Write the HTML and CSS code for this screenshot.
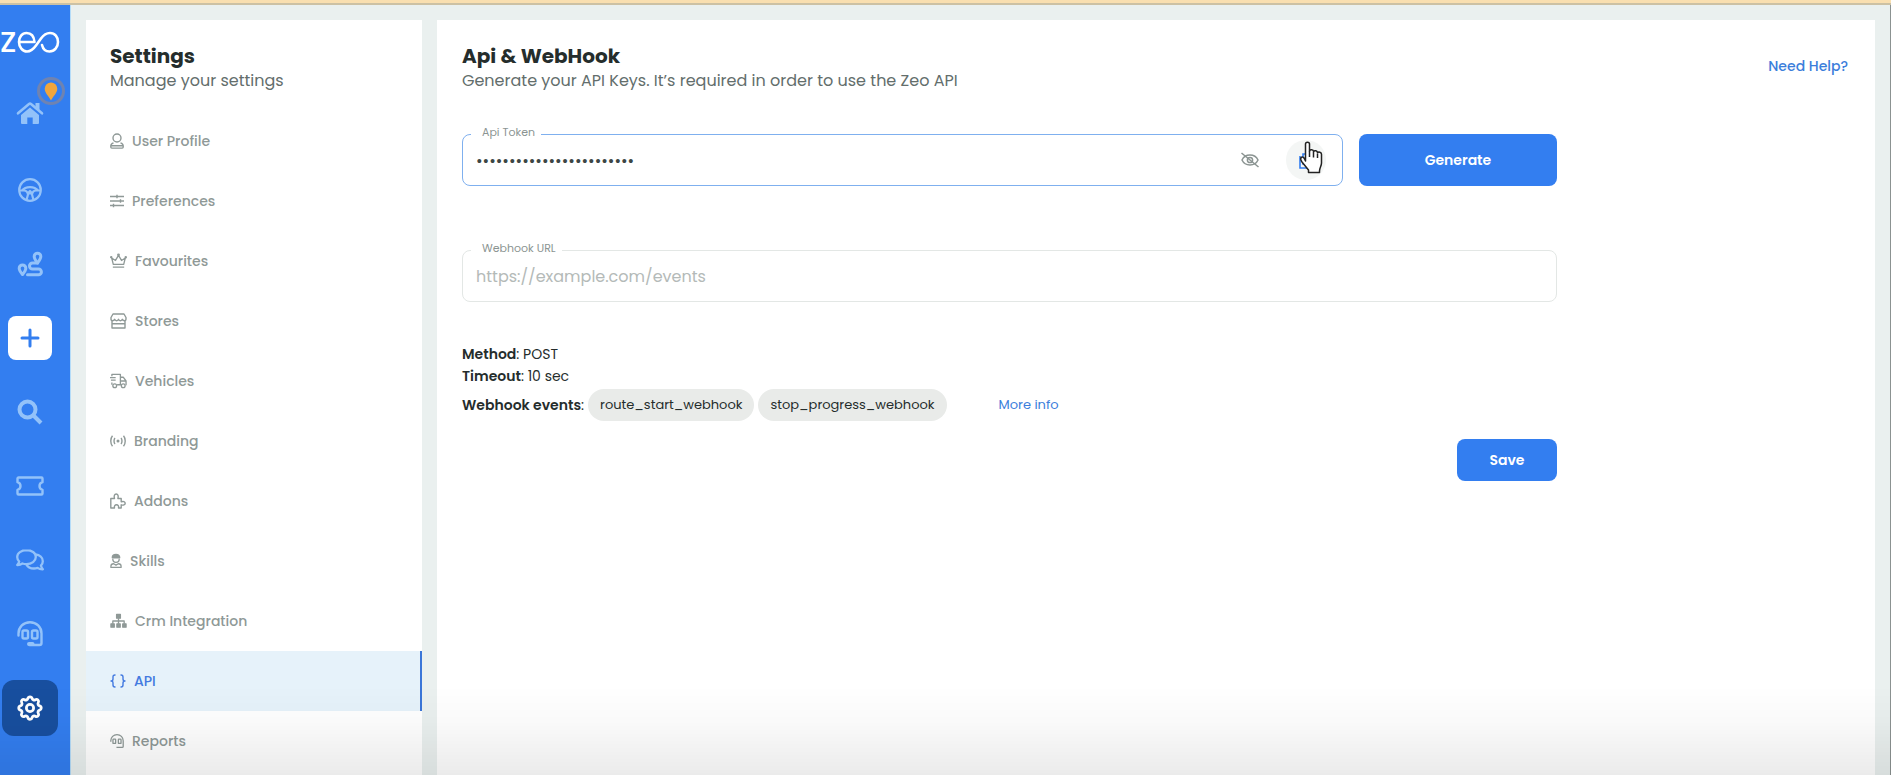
FILE: index.html
```
<!DOCTYPE html>
<html lang="en">
<head>
    <meta charset="UTF-8">
    <meta name="viewport" content="width=device-width, initial-scale=1">
    <title>Zeo - Api &amp; WebHook</title>
    <link rel="stylesheet" href="styles.css">
</head>
<body>
    <div class="topbar"></div>
    <div class="layout">
        <nav class="sidebar" aria-label="Main">
            <a href="#" class="logo" aria-label="Zeo">
                <svg width="60" height="24" viewBox="0 0 60 24" fill="none" stroke="currentColor" stroke-width="2.6" stroke-linecap="round" stroke-linejoin="round">
                    <text class="logo-z" x="0" y="22">z</text>
                    <path d="M19 12h15.500C34 6 31 3 26.500 3 22 3 19 7 19 12s3.500 9.500 8 9.500c4 0 6.500-2.500 9-6l5-7C43.500 5 46 3 50 3c5 0 8 4 8 9s-3.500 9.500-8.500 9.500c-4 0-6.500-2.500-7.500-6.500"/>
                </svg>
            </a>
            <a href="#" class="nav-item home" aria-label="Home">
                <svg width="28" height="24" viewBox="0 0 28 24" fill="currentColor">
                    <path d="M14 6.500 5 14V22a1 1 0 0 0 1 1h5.300v-6.500h5.400V23H22a1 1 0 0 0 1-1v-8z"/>
                    <path d="M2 12.300 13 3a1.600 1.600 0 0 1 2 0l11 9.300" fill="none" stroke="currentColor" stroke-width="2.600" stroke-linecap="round"/>
                    <path d="M19.500 2h4v8l-4-3.500z"/>
                </svg>
                <span class="pin">
                    <svg width="14" height="19" viewBox="0 0 14 19"><path fill="#f0a53c" d="M7 .5A6.300 6.300 0 0 0 .7 6.800C.7 11 5 14.500 7 18.500c2-4 6.300-7.500 6.300-11.700A6.300 6.300 0 0 0 7 .5z"/></svg>
                </span>
            </a>
            <a href="#" class="nav-item" aria-label="Drivers">
                <svg width="24" height="24" viewBox="0 0 24 24" fill="none" stroke="currentColor" stroke-width="2.200" stroke-linejoin="round">
                    <circle cx="12" cy="12" r="10.800"/>
                    <path d="M1.500 12.500H4C7.500 8 16.500 8 20 12.500h2.500M4 12.500h2c2.500 0 3.500 1.500 4 4L8.500 22M20 12.500h-2c-2.500 0-3.500 1.500-4 4l1.500 5.500M9.800 15.500 12 13l2.200 2.500z"/>
                </svg>
            </a>
            <a href="#" class="nav-item" aria-label="Routes">
                <svg width="26" height="26" viewBox="0 0 26 26" fill="none" stroke="currentColor" stroke-width="3" stroke-linecap="round" stroke-linejoin="round">
                    <path d="M20.500 12C18.500 9.500 17.200 7.500 17.200 5.500a3.300 3.300 0 0 1 6.600 0c0 2-1.300 4-3.300 6.500zM5.500 23.500C3.500 21 2.200 19.200 2.200 17.200a3.300 3.300 0 0 1 6.600 0c0 2-1.300 3.800-3.300 6.300z"/>
                    <path d="M20.500 12h-5a3 3 0 0 0 0 6h6a2.900 2.900 0 0 1 0 5.800H10.500"/>
                </svg>
            </a>
            <button type="button" class="nav-add" aria-label="Add">
                <svg width="20" height="20" viewBox="0 0 20 20" fill="none" stroke="currentColor" stroke-width="3" stroke-linecap="round"><path d="M10 2v16M2 10h16"/></svg>
            </button>
            <a href="#" class="nav-item" aria-label="Search">
                <svg width="26" height="26" viewBox="0 0 26 26" fill="none" stroke="currentColor" stroke-width="4"><circle cx="10.500" cy="10.500" r="8"/><path d="m16.500 16.500 7.500 7.500"/></svg>
            </a>
            <a href="#" class="nav-item" aria-label="Tickets">
                <svg width="28" height="20" viewBox="0 0 28 20" fill="none" stroke="currentColor" stroke-width="2.400" stroke-linejoin="round"><path d="M2.500 1.500h23a1 1 0 0 1 1 1v3.700c-2 .6-3 2-3 3.800s1 3.200 3 3.800v3.700a1 1 0 0 1-1 1h-23a1 1 0 0 1-1-1v-3.700c2-.6 3-2 3-3.800s-1-3.200-3-3.800V2.500a1 1 0 0 1 1-1z"/></svg>
            </a>
            <a href="#" class="nav-item" aria-label="Chat">
                <svg width="28" height="22" viewBox="0 0 28 22" fill="none" stroke="currentColor" stroke-width="2.300" stroke-linejoin="round">
                    <path d="M10.500 1.200C5.300 1.200 1.200 4 1.200 8c0 1.800.8 3.300 2 4.500-.3 1.300-1 2.500-2 3.500 2 .1 3.800-.5 5.200-1.500 1.300.5 2.600.7 4.100.7 5.200 0 9.300-3.100 9.300-7.200s-4.100-6.800-9.300-6.800z"/>
                    <path d="M19.500 5.500c4.200.4 7.300 3.200 7.300 6.700 0 1.700-.7 3.200-1.900 4.400.3 1.500 1 2.700 2 3.700-2 .1-3.900-.4-5.300-1.400-1.200.4-2.300.6-3.600.6-3.500 0-6.500-1.700-7.800-4.300"/>
                </svg>
            </a>
            <a href="#" class="nav-item" aria-label="Support">
                <svg width="26" height="26" viewBox="0 0 26 26" fill="none" stroke="currentColor" stroke-width="2.400" stroke-linecap="round" stroke-linejoin="round">
                    <path d="M1.500 14.500V12.500C1.500 6 6.500 1.200 13 1.200S24.500 6 24.500 12.500V22a2 2 0 0 1-2 2H12.500"/>
                    <rect x="5.500" y="9.500" width="5.500" height="8" rx="1.500"/><rect x="15" y="9.500" width="5.500" height="8" rx="1.500"/>
                    <path d="M12 23h3.500" stroke-width="4"/>
                </svg>
            </a>
            <a href="#" class="nav-item selected" aria-label="Settings" aria-current="page">
                <svg width="30" height="30" viewBox="0 0 24 24" fill="none" stroke="currentColor" stroke-width="2.200" stroke-linejoin="round">
                    <path d="M10.325 4.317c.426-1.756 2.924-1.756 3.350 0a1.724 1.724 0 0 0 2.573 1.066c1.543-.94 3.310.826 2.370 2.370a1.724 1.724 0 0 0 1.065 2.572c1.756.426 1.756 2.924 0 3.350a1.724 1.724 0 0 0-1.066 2.573c.94 1.543-.826 3.310-2.370 2.370a1.724 1.724 0 0 0-2.572 1.065c-.426 1.756-2.924 1.756-3.350 0a1.724 1.724 0 0 0-2.573-1.066c-1.543.94-3.310-.826-2.370-2.370a1.724 1.724 0 0 0-1.065-2.572c-1.756-.426-1.756-2.924 0-3.350a1.724 1.724 0 0 0 1.066-2.573c-.94-1.543.826-3.310 2.370-2.370 1 .608 2.296.07 2.572-1.065z"/>
                    <circle cx="12" cy="12" r="2.900"/>
                </svg>
            </a>
        </nav>

        <aside class="settings">
            <div class="heading">
                <h2>Settings</h2>
                <p>Manage your settings</p>
            </div>
            <ul class="menu">
                <li><a href="#">
                    <svg width="14" height="16" viewBox="0 0 14 16"><circle cx="7" cy="5" r="4"/><path d="M3.500 9.800C1.800 10.300.8 11.500.8 13v1c0 .7.400 1.100 1 1.100h10.400c.6 0 1-.4 1-1.100v-1c0-1.500-1-2.700-2.700-3.200M1 12.800h12"/></svg>
                    User Profile</a></li>
                <li><a href="#">
                    <svg width="14" height="14" viewBox="0 0 14 14"><path d="M0 2.500h14M0 7h14M0 11.500h14M7 .7v3.600M10.500 5.200v3.600M3.500 9.700v3.600"/></svg>
                    Preferences</a></li>
                <li><a href="#">
                    <svg width="17" height="16" viewBox="0 0 18 16"><path d="M3.500 11.500 1.800 4.800l4 2.600L9 2l3.200 5.400 4-2.600-1.700 6.700zM3 14.500h12"/><circle cx="9" cy="1.500" r=".8"/><circle cx="1.300" cy="4" r=".6"/><circle cx="16.700" cy="4" r=".6"/></svg>
                    Favourites</a></li>
                <li><a href="#">
                    <svg width="17" height="16" viewBox="0 0 17 16"><path d="M3 1h11l2 3.500v1.800c0 .9-.8 1.500-1.700 1.500-1 0-1.500-.8-2-1.500-.5.700-1.100 1.500-1.900 1.500s-1.400-.8-1.900-1.500c-.5.700-1.100 1.500-1.900 1.500s-1.400-.8-1.900-1.500c-.5.700-1 1.500-2 1.500C1.800 7.800 1 7.200 1 6.300V4.500zM2 7.800V15h13V7.800M2 10.800h13"/></svg>
                    Stores</a></li>
                <li><a href="#">
                    <svg width="17" height="16" viewBox="0 0 18 16"><path d="M2 3V1h9v11H7.500M11 4h3l3 4v4h-.5M0 4.500h6M1 7h5M2 9.500v2.500M11 8h6M11 12h1"/><circle cx="5" cy="13" r="2"/><circle cx="14" cy="13" r="2"/></svg>
                    Vehicles</a></li>
                <li><a href="#">
                    <svg width="16" height="12" viewBox="0 0 16 12"><path d="M2.500.8C.2 3.500.2 8.500 2.500 11.200M13.500.8c2.300 2.700 2.300 7.700 0 10.400M5 3C3.700 4.500 3.700 7.500 5 9M11 3c1.300 1.500 1.300 4.500 0 6"/><circle cx="8" cy="6" r=".8" fill="currentColor"/></svg>
                    Branding</a></li>
                <li><a href="#">
                    <svg width="16" height="16" viewBox="0 0 16 16"><path d="M.8 5.500h3.700c-.8-2.500 0-4.500 1.700-4.500s2.500 2 1.700 4.500h3.300v3.300c2-.8 4-.1 4 1.500s-2 2.300-4 1.500V15H8.500c.5-2-.5-3.300-2-3.300s-2.500 1.300-2 3.300H.8z"/></svg>
                    Addons</a></li>
                <li><a href="#">
                    <svg width="12" height="16" viewBox="0 0 13 16"><path d="M3 5.500C3 8 4.500 9.500 6.500 9.500S10 8 10 5.500M1 15v-1.500C1 11.800 2.500 11 4 11l2.500 1.500L9 11c1.500 0 3 .8 3 2.500V15z"/><path d="M2.500 4.500h8V4C10.500 2 9 .8 6.500.8S2.500 2 2.500 4z" fill="currentColor"/></svg>
                    Skills</a></li>
                <li><a href="#">
                    <svg width="17" height="16" viewBox="0 0 18 16"><path d="M9 5v6M3 11V8h12v3"/><path d="M7 1h4v4H7zM1 11h3.500v3.500H1zM7.300 11h3.500v3.500H7.300zM13.500 11H17v3.500h-3.500z" fill="currentColor"/></svg>
                    Crm Integration</a></li>
                <li><a href="#" class="active" aria-current="page">
                    <svg width="16" height="14" viewBox="0 0 16 14"><path d="M5.500 1H5C3.500 1 3 1.700 3 3v2c0 1.200-.6 2-2 2 1.400 0 2 .8 2 2v2c0 1.300.5 2 2 2h.5M10.500 1h.5c1.500 0 2 .7 2 2v2c0 1.200.6 2 2 2-1.400 0-2 .8-2 2v2c0 1.300-.5 2-2 2h-.5"/></svg>
                    API</a></li>
                <li><a href="#">
                    <svg width="14" height="16" viewBox="0 0 26 28" class="heavy"><path d="M1.500 15.500V13.500C1.500 7 6.500 2.200 13 2.200S24.500 7 24.500 13.500V24a2 2 0 0 1-2 2H12"/><rect x="5.500" y="10.500" width="5" height="8" rx="1"/><rect x="15.500" y="10.500" width="5" height="8" rx="1"/></svg>
                    Reports</a></li>
            </ul>
        </aside>

        <main class="content">
            <header class="content-head">
                <div class="heading">
                    <h1>Api &amp; WebHook</h1>
                    <p>Generate your API Keys. It’s required in order to use the Zeo API</p>
                </div>
                <a href="#" class="link">Need Help?</a>
            </header>
            <form class="form">
                <div class="token-row">
                    <div class="field focused">
                        <label for="token">Api Token</label>
                        <input type="password" id="token" value="a8f31c09d7e24b65a1f0c3d9">
                        <button type="button" class="icon-btn" aria-label="Show token">
                            <svg width="20" height="16" viewBox="0 0 20 16" fill="none" stroke="currentColor" stroke-width="1.500"><path d="M2 8C3.500 4.800 6 3 10 3s6.500 1.800 8 5c-1.500 3.200-4 5-8 5s-6.500-1.800-8-5z"/><circle cx="10" cy="8" r="2.600"/><path d="m1.500 1 17 14"/></svg>
                        </button>
                        <button type="button" class="icon-btn copy" aria-label="Copy token">
                            <svg width="16" height="18" viewBox="0 0 16 18" fill="none" stroke="currentColor" stroke-width="1.600"><path d="M5 3h8v10H5zM10 17H2V5"/></svg>
                            <svg class="cursor" width="24" height="34" viewBox="0 0 24 34" fill="#fff" stroke="#222" stroke-width="1.500" stroke-linejoin="round"><path d="M6.500 20V3c0-2.500 4-2.500 4 0v7c.5-2 4-1.500 4 .5 1-1.500 4-.8 4 1.300 1-1.300 4-.6 4 1.500V22c0 3-2 5-2 8v1.500H9.500V29L3 21c-3-4 0-6.500 2-4z"/><path d="M10.500 10v6M14.500 11v5.500M18.500 12.500v4.500"/></svg>
                        </button>
                    </div>
                    <button type="button" class="btn generate">Generate</button>
                </div>
                <div class="field">
                    <label for="webhook">Webhook URL</label>
                    <input type="text" id="webhook" placeholder="https://example.com/events">
                </div>
                <div class="info">
                    <p><b>Method</b>: POST</p>
                    <p><b>Timeout</b>: 10 sec</p>
                    <div class="events">
                        <span><b>Webhook events</b>:</span>
                        <span class="chip">route_start_webhook</span>
                        <span class="chip">stop_progress_webhook</span>
                        <a href="#" class="link more">More info</a>
                    </div>
                </div>
                <button type="submit" class="btn save">Save</button>
            </form>
        </main>
    </div>
</body>
</html>
```
FILE: styles.css
```
*{margin: 0;padding: 0;box-sizing: border-box;}
a{text-decoration: none;color: inherit;}
ul,li{list-style: none;}
button,input{font: inherit;border: none;outline: none;background: none;}
button{cursor: pointer;}
b{font-weight: 600;}
svg{display: block;flex: none;overflow: visible;}
body{height: 100vh;overflow: hidden;display: flex;flex-direction: column;font-size: 14px;font-family: Poppins, Inter, "Open Sans", sans-serif;color: #252d2c;background: #eaf0ef;}
/* soft shade along the bottom edge */
body::after{content: "";position: fixed;left: 0;right: 0;bottom: 0;height: 90px;background: linear-gradient(rgba(0,0,0,0), rgba(0,0,0,.02) 40%, rgba(0,0,0,.08));pointer-events: none;}

.topbar{flex: none;height: 5px;background: #f9dfb0;border-bottom: 2px solid #ccc1a4;}
.layout{flex: 1;min-height: 0;display: flex;gap: 15px;padding-right: 15px;border-right: 1px solid #8b9291;}

/* sidebar */
.sidebar{flex: none;width: 71px;padding-right: 11px;display: flex;flex-direction: column;align-items: center;gap: 18px;background: #337ef0;border-right: 1px solid #b5dcf8;color: #93c2f9;}
.logo{align-self: flex-start;margin: 25px 0 13px;color: #fff;}
.logo-z{font: 36px Poppins, Lato, sans-serif;fill: currentColor;stroke: none;}
.nav-item{position: relative;flex: none;width: 56px;height: 56px;border-radius: 12px;display: flex;align-items: center;justify-content: center;}
.home{margin-bottom: 3px;}
.nav-item.selected{background: #184f9f;color: #fff;}
.pin{position: absolute;top: -8px;right: -7px;width: 28px;height: 28px;border-radius: 50%;border: 3px solid #6f83b1;display: flex;align-items: center;justify-content: center;}
.nav-add{flex: none;width: 44px;height: 44px;margin: 6px 0;border-radius: 8px;background: #fff;color: #337ef0;display: flex;align-items: center;justify-content: center;}

/* settings menu */
.settings,.content{margin-top: 15px;background: #fff;}
.settings{flex: none;width: 336px;padding-top: 22px;overflow: hidden;}
.heading h1,.heading h2{font-size: 20px;line-height: 28px;font-weight: 700;}
.heading p{font-size: 16px;line-height: 22px;color: #636e6c;}
.settings .heading{padding: 0 24px;}
.menu{margin-top: 19px;}
.menu a{height: 60px;padding-left: 24px;display: flex;align-items: center;gap: 8px;font-weight: 500;color: #8f9997;}
.menu svg{fill: none;stroke: currentColor;stroke-width: 1.400;stroke-linejoin: round;}
.menu svg.heavy{stroke-width: 2.400;}
.menu a.active{color: #437ae0;background: #e6f2fa;border-right: 2px solid #3b76d8;}

/* api & webhook */
.content{flex: 1;min-width: 0;padding: 22px 27px 0 25px;}
.content-head{display: flex;justify-content: space-between;align-items: flex-start;}
.link{color: #3b7edb;}
.content-head .link{font-size: 14px;font-weight: 500;line-height: 20px;padding-top: 14px;}
.form{width: 79%;margin-top: 42px;display: flex;flex-direction: column;}
.token-row{display: flex;gap: 16px;margin-bottom: 64px;}
.field{position: relative;flex: 1;min-height: 52px;padding: 0 16px 0 13px;display: flex;align-items: center;gap: 26px;border: 1px solid #e3e7e5;border-radius: 8px;}
.field.focused{border-color: #7fb0ef;}
.field label{position: absolute;top: -10px;left: 8px;padding: 0 6px 0 11px;font-size: 11px;line-height: 14px;color: #8b9492;background: #fff;}
.field input{flex: 1;min-width: 0;height: 50px;font-size: 16px;color: #3c4644;}
.field input::placeholder{color: #b4bab8;}
.icon-btn{width: 20px;height: 40px;display: flex;align-items: center;justify-content: center;color: #8b9492;}
.icon-btn.copy{position: relative;width: 40px;border-radius: 50%;background: #f4f6f5;color: #337ef0;}
.cursor{position: absolute;left: 13px;top: 1px;}
.btn{border-radius: 8px;background: #337ef0;color: #fff;font-size: 14px;font-weight: 600;}
.generate{width: 198px;}
.info{margin-top: 41px;font-size: 14px;line-height: 22px;}
.events{display: flex;align-items: center;gap: 4px;margin-top: 2px;}
.chip{padding: 5px 12px;border-radius: 16px;background: #e9ebe9;font-size: 13px;}
.more{margin-left: 48px;font-size: 13px;}
.save{align-self: flex-end;width: 100px;height: 42px;margin-top: 18px;}
```
